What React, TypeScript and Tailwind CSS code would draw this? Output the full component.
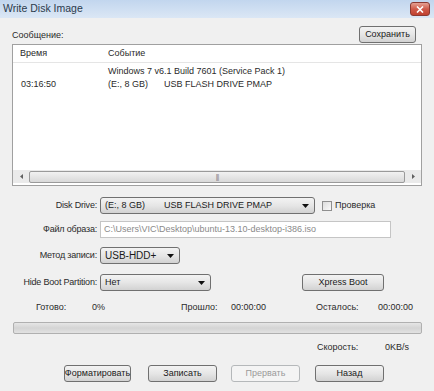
import React from 'react';

const face =
  'flex items-center rounded-[3px] border border-[#707070] bg-gradient-to-b from-[#f3f3f3] via-[#e6e6e6] to-[#d2d2d2] text-[#1a1a1a]';
const btn = `${face} justify-center`;

function Arrow() {
  return (
    <svg width="7" height="4" viewBox="0 0 7 4">
      <path d="M0 0h7L3.5 4z" fill="#111" />
    </svg>
  );
}

function Combo({ width, children }: { width: string; children: React.ReactNode }) {
  return (
    <div className={`${face} ${width} h-[17px] justify-between pl-[4px] pr-[5px]`}>
      <div className="flex items-center">{children}</div>
      <Arrow />
    </div>
  );
}

function Label({ children }: { children: React.ReactNode }) {
  return <div className="w-[88px] shrink-0 pr-[3px] text-right tracking-[-0.2px] text-[#2a2a2a]">{children}</div>;
}

export default function App() {
  return (
    <div
      className="flex h-[391px] w-[434px] flex-col bg-[#f0f0f0] text-[9px] text-[#2a2a2a]"
      style={{ fontFamily: '"Liberation Sans", Arial, sans-serif' }}
    >
      {/* title bar */}
      <div className="flex h-[18px] shrink-0 items-center justify-between bg-gradient-to-b from-[#c2d6ee] to-[#dbe7f5] pl-[3px] pr-[4px]">
        <span className="text-[10.5px] font-normal text-[#2a3a4c]">Write Disk Image</span>
        <div className="flex h-[14px] w-[20px] items-center justify-center rounded-[3px] border border-[#8b3a33] bg-gradient-to-b from-[#e4a093] via-[#cf5a4a] to-[#c0402f]">
          <svg width="8" height="7" viewBox="0 0 8 7">
            <path d="M1 0.5l6 6M7 0.5l-6 6" stroke="#fff" strokeWidth="1.6" />
          </svg>
        </div>
      </div>

      <div className="flex flex-col px-[12px]">
        {/* message header */}
        <div className="mt-[8px] flex h-[17px] items-end justify-between">
          <span className="pb-[1px]">Сообщение:</span>
          <div className={`${btn} mr-[6px] h-[17px] w-[57px] border-[#8a8a8a]`}>Сохранить</div>
        </div>

        {/* list */}
        <div className="mt-[1px] flex h-[142px] flex-col border border-[#a0a0a0] bg-white">
          <div className="flex h-[18px] items-center border-b border-[#e5e5e5]">
            <span className="w-[95px] pl-[7px]">Время</span>
            <span>Событие</span>
          </div>
          <div className="mt-[2px] flex flex-col leading-[13px]">
            <div className="flex">
              <span className="w-[95px]" />
              <span>Windows 7 v6.1 Build 7601 (Service Pack 1)</span>
            </div>
            <div className="flex">
              <span className="w-[95px] pl-[8px]">03:16:50</span>
              <span className="w-[56px]">(E:, 8 GB)</span>
              <span>USB FLASH DRIVE PMAP</span>
            </div>
          </div>
          <div className="flex-1" />
          {/* horizontal scrollbar */}
          <div className="mb-[2px] flex h-[13px] items-center bg-[#eaeaea]">
            <div className="flex w-[16px] items-center justify-center">
              <svg width="3" height="5" viewBox="0 0 3 5">
                <path d="M3 0v5L0 2.5z" fill="#606060" />
              </svg>
            </div>
            <div className="flex h-[12px] flex-1 items-center justify-center rounded-[2px] border border-[#9a9a9a] bg-gradient-to-b from-[#f2f2f2] to-[#d9d9d9]">
              <span className="text-[7px] leading-none tracking-[-1px] text-[#888]">|||</span>
            </div>
            <div className="flex w-[16px] items-center justify-center">
              <svg width="3" height="5" viewBox="0 0 3 5">
                <path d="M0 0v5L3 2.5z" fill="#606060" />
              </svg>
            </div>
          </div>
        </div>

        {/* disk drive */}
        <div className="mt-[11px] flex items-center">
          <Label>Disk Drive:</Label>
          <Combo width="w-[215px]">
            <span className="w-[59px]">(E:, 8 GB)</span>
            <span>USB FLASH DRIVE PMAP</span>
          </Combo>
          <div className="ml-[7px] h-[10px] w-[10px] border border-[#8f8f8f] bg-gradient-to-br from-[#dcdcdc] to-[#fafafa]" />
          <span className="ml-[3px]">Проверка</span>
        </div>

        {/* image file */}
        <div className="mt-[7px] flex items-center">
          <Label>Файл образа:</Label>
          <div className="flex h-[17px] w-[291px] items-center border border-[#c5c5c5] bg-white pl-[3px] text-[#8a8a8a]">
            C:\Users\VIC\Desktop\ubuntu-13.10-desktop-i386.iso
          </div>
        </div>

        {/* method */}
        <div className="mt-[9px] flex items-center">
          <Label>Метод записи:</Label>
          <Combo width="w-[80px]">
            <span className="text-[10px]">USB-HDD+</span>
          </Combo>
        </div>

        {/* hide boot */}
        <div className="mt-[10px] flex items-center">
          <Label>Hide Boot Partition:</Label>
          <Combo width="w-[111px]">
            <span>Нет</span>
          </Combo>
          <div className={`${btn} ml-[91px] h-[17px] w-[82px]`}>Xpress Boot</div>
        </div>

        {/* progress labels */}
        <div className="mt-[11px] flex h-[12px] items-center">
          <span className="box-content w-[56px] pl-[24px]">Готово:</span>
          <span className="w-[89px]">0%</span>
          <span className="w-[50px]">Прошло:</span>
          <span className="w-[85px]">00:00:00</span>
          <span className="w-[62px]">Осталось:</span>
          <span>00:00:00</span>
        </div>

        {/* progress bar */}
        <div className="mt-[8px] ml-[1px] h-[12px] w-[409px] rounded-[2px] border border-[#b0b0b0] bg-gradient-to-b from-[#e6e6e6] via-[#d4d4d4] to-[#e2e2e2]" />

        {/* speed */}
        <div className="mt-[8px] flex h-[12px] items-center">
          <span className="ml-[305px] w-[68px]">Скорость:</span>
          <span>0KB/s</span>
        </div>

        {/* buttons */}
        <div className="mt-[11px] flex items-center">
          <div className={`${btn} ml-[52px] h-[17px] w-[67px] rounded-[1px] border-[#606060]`}>Форматировать</div>
          <div className={`${btn} ml-[17px] h-[17px] w-[69px]`}>Записать</div>
          <div className="ml-[14px] flex h-[17px] w-[69px] items-center justify-center rounded-[3px] border border-[#b5b8ba] bg-[#f4f4f4] text-[#9a9a9a]">
            Прервать
          </div>
          <div className={`${btn} ml-[15px] h-[17px] w-[69px]`}>Назад</div>
        </div>
      </div>
    </div>
  );
}
